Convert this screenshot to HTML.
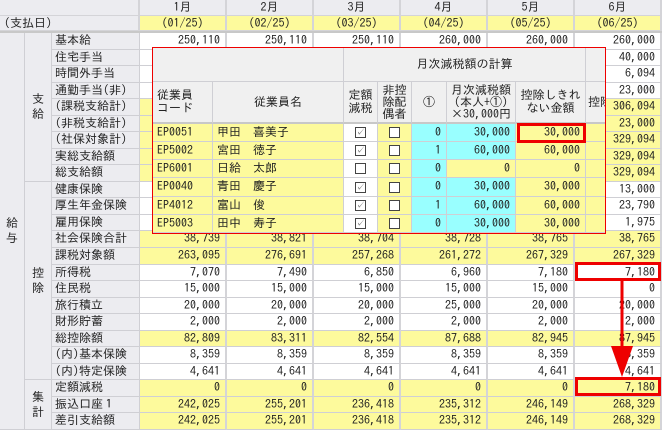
<!DOCTYPE html>
<html><head><meta charset="utf-8"><style>
*{box-sizing:border-box;margin:0;padding:0}
body{width:662px;height:430px;overflow:hidden;background:#fff;font-family:"IPAGothic","Liberation Sans","Noto Sans CJK JP",sans-serif;font-size:12px;color:#222;position:relative}
.hdr{position:absolute;left:0;top:0;width:662px;height:33px;display:grid;grid-template-columns:140px repeat(6,87px);grid-template-rows:16px 15px;border-bottom:2px solid #c8c8c8;background:#ececf0}
.hdr div{border-right:2px solid #d4d4d8;border-bottom:1px solid #d4d4d8;text-align:center;line-height:15px;white-space:nowrap}
.hdr .y{background:#fdfa9c}
.g{position:absolute;left:0;top:33px;width:662px;height:397px;display:grid;grid-template-columns:25px 27px 88px repeat(6,87px);grid-template-rows:repeat(24,1fr)}
.g>div{border-right:1px solid #cfcfd4;border-bottom:1px solid #cfcfd4;white-space:nowrap;line-height:15px;overflow:hidden}
.lb{background:#ececf0;padding-left:3px}
.grp{background:#ececf0;display:flex;align-items:center;justify-content:center;text-align:center;line-height:15px!important}
.v{text-align:right;padding-right:5px;border-right:2px solid #d4d4d8!important}
.y{background:#fdfa9c}
.pop{position:absolute;left:152px;top:47px;width:454px;height:187px;border:1px solid #e00;background:#fff;overflow:hidden;display:grid;grid-template-columns:60px 131px 34px 34px 35px 69px 70px 25px;grid-template-rows:34px 42px repeat(6,1fr)}
.pop>div{border-right:1px solid #cfcfd4;border-bottom:1px solid #cfcfd4;white-space:nowrap;overflow:hidden;line-height:13px}
.ph{background:#f0f0f0;display:flex;align-items:center;justify-content:center;text-align:center}
.pd{padding-left:4px;line-height:17px!important}
.pr{text-align:right;padding-right:5px;line-height:17px!important}
.c{background:#9ff}
.cb{display:flex;align-items:center;justify-content:center}
.cb span{display:inline-block;width:11px;height:11px;border:1px solid #444;background:#fff;font-size:9px;line-height:9px;text-align:center;color:#777}
.box{position:absolute;border:3px solid #e00}
</style></head><body>
<div class="hdr">
<div></div><div>1月</div><div>2月</div><div>3月</div><div>4月</div><div>5月</div><div>6月</div>
<div style="text-align:left;padding-left:4px">(支払日)</div><div class="y">(01/25)</div><div class="y">(02/25)</div><div class="y">(03/25)</div><div class="y">(04/25)</div><div class="y">(05/25)</div><div class="y">(06/25)</div>
</div>
<div class="g">
<div class="grp" style="grid-column:1;grid-row:1/25">給<br>与</div>
<div class="grp" style="grid-column:2;grid-row:1/10">支<br>給</div>
<div class="grp" style="grid-column:2;grid-row:10/22">控<br>除</div>
<div class="grp" style="grid-column:2;grid-row:22/25">集<br>計</div>

<div class="lb">基本給</div><div class="v">250,110</div><div class="v">250,110</div><div class="v">250,110</div><div class="v">260,000</div><div class="v">260,000</div><div class="v">260,000</div>
<div class="lb">住宅手当</div><div class="v"></div><div class="v"></div><div class="v"></div><div class="v"></div><div class="v"></div><div class="v">40,000</div>
<div class="lb">時間外手当</div><div class="v"></div><div class="v"></div><div class="v"></div><div class="v"></div><div class="v"></div><div class="v">6,094</div>
<div class="lb">通勤手当(非)</div><div class="v"></div><div class="v"></div><div class="v"></div><div class="v"></div><div class="v"></div><div class="v">23,000</div>
<div class="lb">(課税支給計)</div><div class="v y"></div><div class="v y"></div><div class="v y"></div><div class="v y"></div><div class="v y"></div><div class="v y">306,094</div>
<div class="lb">(非税支給計)</div><div class="v y"></div><div class="v y"></div><div class="v y"></div><div class="v y"></div><div class="v y"></div><div class="v y">23,000</div>
<div class="lb">(社保対象計)</div><div class="v y"></div><div class="v y"></div><div class="v y"></div><div class="v y"></div><div class="v y"></div><div class="v y">329,094</div>
<div class="lb">実総支給額</div><div class="v y"></div><div class="v y"></div><div class="v y"></div><div class="v y"></div><div class="v y"></div><div class="v y">329,094</div>
<div class="lb">総支給額</div><div class="v y"></div><div class="v y"></div><div class="v y"></div><div class="v y"></div><div class="v y"></div><div class="v y">329,094</div>
<div class="lb">健康保険</div><div class="v"></div><div class="v"></div><div class="v"></div><div class="v"></div><div class="v"></div><div class="v">13,000</div>
<div class="lb">厚生年金保険</div><div class="v"></div><div class="v"></div><div class="v"></div><div class="v"></div><div class="v"></div><div class="v">23,790</div>
<div class="lb">雇用保険</div><div class="v"></div><div class="v"></div><div class="v"></div><div class="v"></div><div class="v"></div><div class="v">1,975</div>
<div class="lb">社会保険合計</div><div class="v y">38,739</div><div class="v y">38,821</div><div class="v y">38,704</div><div class="v y">38,728</div><div class="v y">38,765</div><div class="v y">38,765</div>
<div class="lb">課税対象額</div><div class="v y">263,095</div><div class="v y">276,691</div><div class="v y">257,268</div><div class="v y">261,272</div><div class="v y">267,329</div><div class="v y">267,329</div>
<div class="lb">所得税</div><div class="v">7,070</div><div class="v">7,490</div><div class="v">6,850</div><div class="v">6,960</div><div class="v">7,180</div><div class="v">7,180</div>
<div class="lb">住民税</div><div class="v">15,000</div><div class="v">15,000</div><div class="v">15,000</div><div class="v">15,000</div><div class="v">15,000</div><div class="v">0</div>
<div class="lb">旅行積立</div><div class="v">20,000</div><div class="v">20,000</div><div class="v">20,000</div><div class="v">25,000</div><div class="v">20,000</div><div class="v">20,000</div>
<div class="lb">財形貯蓄</div><div class="v">2,000</div><div class="v">2,000</div><div class="v">2,000</div><div class="v">2,000</div><div class="v">2,000</div><div class="v">2,000</div>
<div class="lb">総控除額</div><div class="v y">82,809</div><div class="v y">83,311</div><div class="v y">82,554</div><div class="v y">87,688</div><div class="v y">82,945</div><div class="v y">87,945</div>
<div class="lb">(内)基本保険</div><div class="v">8,359</div><div class="v">8,359</div><div class="v">8,359</div><div class="v">8,359</div><div class="v">8,359</div><div class="v">8,359</div>
<div class="lb">(内)特定保険</div><div class="v">4,641</div><div class="v">4,641</div><div class="v">4,641</div><div class="v">4,641</div><div class="v">4,641</div><div class="v">4,641</div>
<div class="lb">定額減税</div><div class="v y">0</div><div class="v y">0</div><div class="v y">0</div><div class="v y">0</div><div class="v y">0</div><div class="v y">7,180</div>
<div class="lb">振込口座１</div><div class="v y">242,025</div><div class="v y">255,201</div><div class="v y">236,418</div><div class="v y">235,312</div><div class="v y">246,149</div><div class="v y">268,329</div>
<div class="lb">差引支給額</div><div class="v y">242,025</div><div class="v y">255,201</div><div class="v y">236,418</div><div class="v y">235,312</div><div class="v y">246,149</div><div class="v y">268,329</div>
</div>

<div class="pop">
<div class="ph" style="grid-column:1/3"></div>
<div class="ph" style="grid-column:3/8">月次減税額の計算</div>
<div class="ph"></div>
<div class="ph" style="border-bottom:2px solid #c8c8c8;justify-content:flex-start;padding-left:4px;text-align:left">従業員<br>コード</div>
<div class="ph" style="border-bottom:2px solid #c8c8c8">従業員名</div>
<div class="ph" style="border-bottom:2px solid #c8c8c8">定額<br>減税</div>
<div class="ph" style="border-bottom:2px solid #c8c8c8;line-height:12px">非控<br>除配<br>偶者</div>
<div class="ph" style="border-bottom:2px solid #c8c8c8">①</div>
<div class="ph" style="border-bottom:2px solid #c8c8c8;line-height:12px">月次減税額<br>(本人+①)<br>×30,000円</div>
<div class="ph" style="border-bottom:2px solid #c8c8c8">控除しきれ<br>ない金額</div>
<div class="ph" style="border-bottom:2px solid #c8c8c8;justify-content:flex-start;padding-left:2px">控除</div>

<div class="pd y">EP0051</div><div class="pd y">甲田　喜美子</div><div class="cb"><span>✓</span></div><div class="cb y"><span></span></div><div class="pr c">0</div><div class="pr c">30,000</div><div class="pr y">30,000</div><div class="y"></div>
<div class="pd y">EP5002</div><div class="pd y">宮田　徳子</div><div class="cb"><span>✓</span></div><div class="cb y"><span></span></div><div class="pr c">1</div><div class="pr c">60,000</div><div class="pr y">60,000</div><div class="y"></div>
<div class="pd y">EP6001</div><div class="pd y">日給　太郎</div><div class="cb"><span></span></div><div class="cb y"><span></span></div><div class="pr c">0</div><div class="pr y">0</div><div class="pr y">0</div><div class="y"></div>
<div class="pd y">EP0040</div><div class="pd y">青田　慶子</div><div class="cb"><span>✓</span></div><div class="cb y"><span></span></div><div class="pr c">0</div><div class="pr c">30,000</div><div class="pr y">30,000</div><div class="y"></div>
<div class="pd y">EP4012</div><div class="pd y">富山　俊</div><div class="cb"><span>✓</span></div><div class="cb y"><span></span></div><div class="pr c">1</div><div class="pr c">60,000</div><div class="pr y">60,000</div><div class="y"></div>
<div class="pd y">EP5003</div><div class="pd y">田中　寿子</div><div class="cb"><span>✓</span></div><div class="cb y"><span></span></div><div class="pr c">0</div><div class="pr c">30,000</div><div class="pr y">30,000</div><div class="y"></div>
</div>

<div class="box" style="left:517px;top:123px;width:69px;height:20px"></div>
<div class="box" style="left:575px;top:262px;width:86px;height:19px"></div>
<div class="box" style="left:575px;top:377px;width:86px;height:19px"></div>
<svg style="position:absolute;left:0;top:0" width="662" height="430"><line x1="622" y1="281" x2="622" y2="350" stroke="#e00" stroke-width="3"/><polygon points="611,346 633,346 622,377" fill="#e00"/></svg>
</body></html>
